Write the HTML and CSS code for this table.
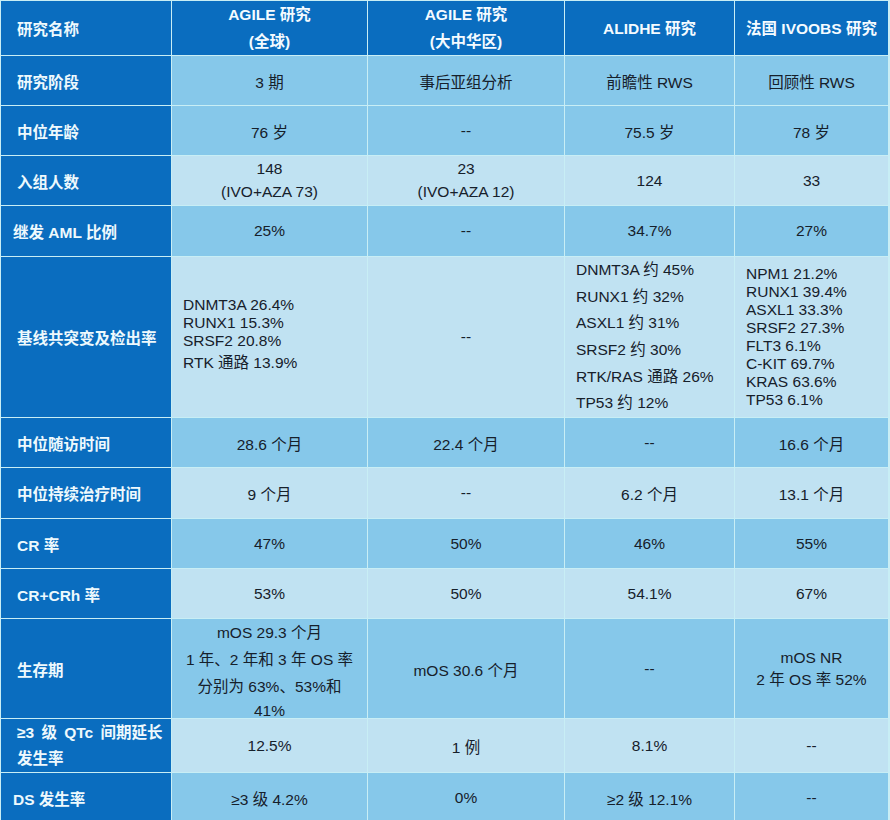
FILE: index.html
```html
<!DOCTYPE html>
<html lang="zh-CN">
<head>
<meta charset="utf-8">
<title>研究对比</title>
<link rel="stylesheet" href="styles.css">
</head>
<body>
<table class="grid">
  <colgroup>
    <col class="c1"><col class="c2"><col class="c3"><col class="c4"><col class="c5">
  </colgroup>
  <tr class="r-head">
    <th class="lab">研究名称</th>
    <th class="hd">AGILE 研究<br>(全球)</th>
    <th class="hd">AGILE 研究<br>(大中华区)</th>
    <th class="hd">ALIDHE 研究</th>
    <th class="hd">法国 IVOOBS 研究</th>
  </tr>
  <tr class="mid h49">
    <th class="lab">研究阶段</th>
    <td>3 期</td><td>事后亚组分析</td><td>前瞻性 RWS</td><td>回顾性 RWS</td>
  </tr>
  <tr class="mid h49">
    <th class="lab">中位年龄</th>
    <td>76 岁</td><td>--</td><td>75.5 岁</td><td>78 岁</td>
  </tr>
  <tr class="lite h49">
    <th class="lab">入组人数</th>
    <td class="lh23">148<br>(IVO+AZA 73)</td><td class="lh23">23<br>(IVO+AZA 12)</td><td>124</td><td>33</td>
  </tr>
  <tr class="mid h50">
    <th class="lab tight">继发 AML 比例</th>
    <td>25%</td><td>--</td><td>34.7%</td><td>27%</td>
  </tr>
  <tr class="lite h160">
    <th class="lab">基线共突变及检出率</th>
    <td class="list up">DNMT3A 26.4%<br>RUNX1 15.3%<br>SRSF2 20.8%<br>RTK 通路 13.9%</td>
    <td>--</td>
    <td class="list lh26">DNMT3A 约 45%<br>RUNX1 约 32%<br>ASXL1 约 31%<br>SRSF2 约 30%<br>RTK/RAS 通路 26%<br>TP53 约 12%</td>
    <td class="list lh18">NPM1 21.2%<br>RUNX1 39.4%<br>ASXL1 33.3%<br>SRSF2 27.3%<br>FLT3 6.1%<br>C-KIT 69.7%<br>KRAS 63.6%<br>TP53 6.1%</td>
  </tr>
  <tr class="mid h49">
    <th class="lab">中位随访时间</th>
    <td>28.6 个月</td><td>22.4 个月</td><td>--</td><td>16.6 个月</td>
  </tr>
  <tr class="lite h50">
    <th class="lab">中位持续治疗时间</th>
    <td>9 个月</td><td>--</td><td>6.2 个月</td><td>13.1 个月</td>
  </tr>
  <tr class="mid h49">
    <th class="lab">CR 率</th>
    <td>47%</td><td>50%</td><td>46%</td><td>55%</td>
  </tr>
  <tr class="lite h49">
    <th class="lab">CR+CRh 率</th>
    <td>53%</td><td>50%</td><td>54.1%</td><td>67%</td>
  </tr>
  <tr class="mid h99">
    <th class="lab">生存期</th>
    <td><div class="surv"><span class="ln">mOS 29.3 个月</span><span class="ln">1 年、2 年和 3 年 OS 率</span><span class="ln">分别为 63%、53%和</span><span class="ln last">41%</span></div></td>
    <td>mOS 30.6 个月</td>
    <td>--</td>
    <td class="lh22">mOS NR<br>2 年 OS 率 52%</td>
  </tr>
  <tr class="lite h53">
    <th class="lab qtc">≥3 级 QTc 间期延长<br>发生率</th>
    <td>12.5%</td><td>1 例</td><td>8.1%</td><td>--</td>
  </tr>
  <tr class="mid h49">
    <th class="lab tight">DS 发生率</th>
    <td>≥3 级 4.2%</td><td>0%</td><td>≥2 级 12.1%</td><td>--</td>
  </tr>
</table>
</body>
</html>
```

FILE: styles.css
```css
html, body {
  margin: 0;
  padding: 0;
  background: #c8eef5;
}

.grid {
  border-collapse: separate;
  border-spacing: 1px;
  background: #c8eef5;
  table-layout: fixed;
  width: 889px;
  font-family: "Liberation Sans", Arial, "Noto Sans CJK SC", sans-serif;
  font-size: 15.5px;
}

.c1 { width: 170px; }
.c2 { width: 195px; }
.c3 { width: 196px; }
.c4 { width: 169px; }
.c5 { width: 153px; }

.grid th,
.grid td {
  padding: 0;
  vertical-align: middle;
}

.r-head { height: 54px; }
.h49 { height: 49px; }
.h50 { height: 50px; }
.h53 { height: 53px; }
.h99 { height: 99px; }
.h160 { height: 160px; }

.hd {
  background: #0a6dbf;
  color: #f4fbff;
  font-weight: bold;
  text-align: center;
  line-height: 27px;
  white-space: nowrap;
}

.lab {
  background: #0a6dbf;
  color: #eef9fd;
  font-weight: bold;
  text-align: left;
  padding-left: 16px !important;
  white-space: nowrap;
}

.lab.tight {
  padding-left: 12px !important;
}

.lab.qtc {
  line-height: 26px;
  word-spacing: 3px;
}

.grid td {
  color: #16202b;
  text-align: center;
  white-space: nowrap;
}

.mid td { background: #86c8ea; }
.lite td { background: #c0e2f2; }

.grid td.list {
  text-align: left;
  padding-left: 11px;
}

.grid td.up {
  padding-bottom: 6px;
}

.surv {
  margin: -2px 0 -6px;
}

.ln {
  display: block;
  line-height: 27px;
}

.ln.last {
  line-height: 22px;
}

.lh18 { line-height: 18px; }
.lh22 { line-height: 22px; }
.lh23 { line-height: 22.5px; }
.lh26 { line-height: 26.6px; }
```
